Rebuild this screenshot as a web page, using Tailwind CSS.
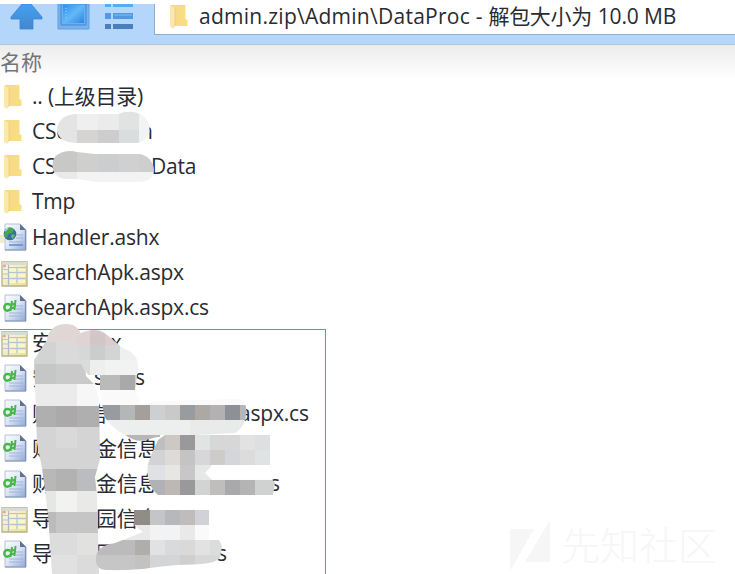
<!DOCTYPE html>
<html lang="zh-CN">
<head>
<meta charset="utf-8">
<title>admin.zip</title>
<script src="https://cdn.jsdelivr.net/npm/@tailwindcss/browser@4"></script>
</head>
<body class="bg-white">
<svg class="absolute size-0">
  <defs>
    <linearGradient id="fg" x1="0" x2="1"><stop offset="0" stop-color="#f5d888"/><stop offset="1" stop-color="#f9df83"/></linearGradient>
    <linearGradient id="pg" x1="0" y1="0" x2="1" y2="1"><stop offset="0" stop-color="#fbfcff"/><stop offset=".5" stop-color="#dce5f5"/><stop offset="1" stop-color="#8fa7d4"/></linearGradient>
    <linearGradient id="tg" x1="0" y1="0" x2="1" y2="1"><stop offset="0" stop-color="#faf9ed"/><stop offset="1" stop-color="#e9df91"/></linearGradient>
    <linearGradient id="bg" x1="0" y1="0" x2="0" y2="1"><stop offset="0" stop-color="#42a0f2"/><stop offset="1" stop-color="#4587cd"/></linearGradient>
    <linearGradient id="sq" x1="0" y1="0" x2="1" y2="1"><stop offset="0" stop-color="#2c8ff0"/><stop offset=".5" stop-color="#65b8f8"/><stop offset="1" stop-color="#2f85e0"/></linearGradient>
    <symbol id="folder" viewBox="0 0 28 30"><path d="M5 3h14.500v14l2 1v6H5z" fill="url(#fg)"/><path d="M4 3l5 3v17l-2 4-3-2z" fill="#fbe8ac"/><path d="M9 6v17l-1 2" fill="none" stroke="#efcb72" stroke-width=".8"/></symbol>
    <symbol id="page" viewBox="0 0 28 30"><path d="M5 2h15l6 6v20H5z" fill="url(#pg)" stroke="#b6c0d2"/><path d="M25.500 8v20H5" fill="none" stroke="#7f93b8" stroke-width="1.200"/><path d="M20 2v6h6z" fill="#61718f"/><path d="M16 13h7M16 16h7M9 20h14M9 23h14" stroke="#9fb3da" stroke-width="1"/></symbol>
    <symbol id="cs" viewBox="0 0 28 30"><use href="#page"/><path d="M10 11.500C6 10 4.300 12 4.300 14.500s2.700 4.500 5.700 2" fill="none" stroke="#48b648" stroke-width="2.500"/><path d="M10.500 18l1.500-10M14.500 17l1-10M9.500 12.500l6-2M9.500 16l6-2" fill="none" stroke="#48b648" stroke-width="2"/></symbol>
    <symbol id="globe" viewBox="0 0 28 30"><use href="#page"/><path d="M0 13h4v8H0z" fill="#eeeccb"/><circle cx="10" cy="12" r="6.300" fill="#37709f"/><path d="M5 8c3-4 8-3 9 0l-2 3-4 1-1 4-3-2z" fill="#4aa655"/><path d="M12 12l3 1-2 4-2-2z" fill="#68b874"/><path d="M5 9l3-3" stroke="#a7d8ed" stroke-width="1.500"/><path d="M9 23h14" stroke="#5f84d0" stroke-width="1.300"/></symbol>
    <symbol id="table" viewBox="0 0 28 30"><path d="M2 4h25v24H2z" fill="url(#tg)" stroke="#b5b389" stroke-width="1.300"/><path d="M2 4h25v3H2z" fill="#d9dcd0"/><path d="M8.500 7v20" stroke="#aab9cc" stroke-width="1.200"/><path d="M3 11.500h6M3 16h6M3 20.500h6M9 9.500h17M9 14.500h17M9 20.500h17M17 9v16" stroke="#b7c3ce"/><path d="M10 11h6v2h-6zM18 11h7v2h-7zM10 16h6v3h-6zM18 16h7v3h-7zM10 22h6v3h-6zM18 22h7v3h-7z" fill="#f8f5cf"/><circle cx="4.500" cy="8" r="1.500" fill="#f0a08c"/></symbol>
  </defs>
</svg>
<div class="relative flex h-[574px] w-[735px] flex-col overflow-hidden bg-white font-['Open_Sans','Noto_Sans_CJK_SC',sans-serif] text-[21px] text-[#282b32]">
  <header class="mt-1 flex h-[41px] shrink-0 border-b border-[#b6c3d1] bg-[#b3d6fa]">
    <svg class="h-[40px] w-[154px] shrink-0" viewBox="0 4 154 40">
      <path d="M22 4h9l11 13v2H33v10H20V19H11v-2z" fill="url(#bg)" stroke="#4087d4" stroke-width=".8"/>
      <path d="M58 4h31v25H58z" fill="#78b2ec" stroke="#5e9fe3"/><path d="M61 4h25v21H61z" fill="#68b0f0" stroke="#3f89d5"/><path d="M63 5h21v18H63z" fill="url(#sq)"/><path d="M66 8v12" stroke="#a8dafa" stroke-dasharray="1 2"/>
      <path d="M105 4h6v3h-6zM113 4h20v3h-20z" fill="#50adf6"/><path d="M105 13h6v6h-6zM113 13h20v6h-20z" fill="#509ae5"/><path d="M105 24h6v5h-6zM113 24h20v5h-20z" fill="#4c7fba"/><path d="M114 15h18" stroke="#80bdf1"/>
    </svg>
    <div class="flex h-[31px] flex-1 items-center border-b border-l border-[#8eaed0] bg-white pb-[4px] pl-[11px]">
      <svg class="h-[30px] w-[28px] shrink-0" viewBox="0 0 28 30"><use href="#folder"/></svg>
      <span class="ml-[5px] whitespace-nowrap tracking-[0.26px]">admin.zip\Admin\DataProc - <span class="tracking-[-0.3px]">解包大小为</span> <span class="tracking-[-0.15px]">10.0 MB</span></span>
    </div>
  </header>
  <div class="flex h-[34px] shrink-0 items-center bg-linear-to-b from-[#ececec] to-white pt-[2px] text-[#747474]"><span>名称</span></div>
  <main class="flex flex-col whitespace-nowrap tracking-[-0.2px] *:flex *:h-[35.2px] *:shrink-0 *:items-center *:gap-[4px]">
    <div><svg class="h-[30px] w-[28px]"><use href="#folder"/></svg><span>.. (上级目录)</span></div>
    <div><svg class="h-[30px] w-[28px]"><use href="#folder"/></svg><span class="w-[104px]">CSc</span><span>n</span></div>
    <div><svg class="h-[30px] w-[28px]"><use href="#folder"/></svg><span class="w-[115px]">CS</span><span>Data</span></div>
    <div><svg class="h-[30px] w-[28px]"><use href="#folder"/></svg><span>Tmp</span></div>
    <div><svg class="h-[30px] w-[28px]"><use href="#globe"/></svg><span>Handler.ashx</span></div>
    <div><svg class="h-[30px] w-[28px]"><use href="#table"/></svg><span>SearchApk.aspx</span></div>
    <div><svg class="h-[30px] w-[28px]"><use href="#cs"/></svg><span>SearchApk.aspx.cs</span></div>
    <div><svg class="h-[30px] w-[28px]"><use href="#table"/></svg><span class="w-[62px]">安</span><span>px</span></div>
    <div><svg class="h-[30px] w-[28px]"><use href="#cs"/></svg><span class="w-[58px]">安</span><span class="w-[37px]">sp</span><span>s</span></div>
    <div><svg class="h-[30px] w-[28px]"><use href="#cs"/></svg><span class="w-[50px]">财</span><span class="w-[149px]">信</span><span>aspx.cs</span></div>
    <div><svg class="h-[30px] w-[28px]"><use href="#cs"/></svg><span class="w-[60px]">财</span><span>金信息<span class="-ml-[1px]">化</span></span></div>
    <div><svg class="h-[30px] w-[28px]"><use href="#cs"/></svg><span class="w-[60px]">财</span><span class="w-[170px]">金信息</span><span>s</span></div>
    <div><svg class="h-[30px] w-[28px]"><use href="#table"/></svg><span class="w-[60px]">导</span><span>园信息</span></div>
    <div><svg class="h-[30px] w-[28px]"><use href="#cs"/></svg><span class="w-[60px]">导</span><span class="w-[117px]">园</span><span>s</span></div>
  </main>

  <!-- highlight frame, pixelated masks and watermark -->
  <div class="absolute -left-px top-[329px] h-[250px] w-[327px] border border-[#ff5c5c]"></div>
  <svg class="absolute inset-0 h-[574px] w-[735px]" viewBox="0 0 735 574" shape-rendering="crispEdges">
    <defs>
      <clipPath id="c1"><path d="M57 129C58 119 67 114 76 114h42c10-4 22-3 28 5 5 7 5 17-2 21-5 4-10 3-17 3H77c-12 0-20-5-20-14z"/></clipPath>
      <clipPath id="c2"><path d="M53 161c2-8 14-12 24-9l18 2h43c9 0 16 8 16 16 0 9-8 12-17 12H95l-18-3H64c-8-2-13-8-11-18z"/></clipPath>
      <clipPath id="c3"><path d="M34 360l13-20c1-10 8-16 19-16 9 0 13 4 16 12l4 40 8 8 5 15 1 60-5 18 2 18 2 79H52l-4-60-6-46-5-25z"/></clipPath>
      <clipPath id="c4"><path d="M75 345c0-10 7-15 20-15 11 0 18 12 30 19 13 5 15 15 12 27l-2 14 6 15 16-4 80-2c8 0 11 10 9 16-1 9-5 14-11 18l-78 4-11 3c-8 2-13 0-21-5-10-5-19-14-21-20l-5-30-6-5-9-10c-4-8-6-16-5-25z"/></clipPath>
      <clipPath id="c5"><path d="M158 440l7-5h105v30h-57l-8 8 5 5h61l4 5-2 12H158c-9-8-12-19-10-31l4-11z"/></clipPath>
      <clipPath id="c6"><path d="M96 560c0-12 8-15 19-17l28-11-9-7V510h75v30h10l3 6-2 12c-7 7-22 6-42 7-29 2-35 6-72 5-5 0-10-3-10-10z"/></clipPath>
    </defs>
    <g clip-path="url(#c1)">
      <path fill="#e4e4e4" d="M57 112h20v32H57z"/><path fill="#efefef" d="M77 112h21v18H77z"/><path fill="#ebebeb" d="M98 112h21v18H98z"/><path fill="#e1e2e2" d="M119 110h20v20h-20z"/><path fill="#d5d4d3" d="M77 130h21v15H77z"/><path fill="#cdcdcd" d="M98 130h21v15H98z"/><path fill="#dadddd" d="M119 130h21v15h-21z"/><path fill="#f2f3f3" d="M139 110h14v36h-14z"/>
    </g>
    <g clip-path="url(#c2)">
      <path fill="#c8c8c7" d="M52 148h25v24H52z"/><path fill="#cfcfce" d="M77 148h21v24H77z"/><path fill="#cccdcf" d="M98 148h21v24H98z"/><path fill="#d0d0d0" d="M119 148h20v24h-20z"/><path fill="#cecece" d="M139 148h17v24h-17z"/><path fill="#eaeaea" d="M52 172h25v12H52z"/><path fill="#f3f3f3" d="M77 172h80v12H77z"/>
    </g>
    <g clip-path="url(#c3)">
      <path fill="#e0d6d6" d="M34 320h70v22H34z"/><path fill="#d2d4d3" d="M34 342h22v22H34z"/><path fill="#dadada" d="M56 342h48v22H56z"/>
      <path fill="#c5c6c6" d="M34 364h22v20H34z"/><path fill="#cacaca" d="M56 364h48v20H56z"/><path fill="#ebebeb" d="M34 384h43v22H34z"/><path fill="#f7f7f7" d="M77 384h30v22H77z"/>
      <path fill="#b0afaf" d="M34 406h22v21H34z"/><path fill="#aba9aa" d="M56 406h21v21H56z"/><path fill="#aeafae" d="M77 406h30v21H77z"/>
      <path fill="#d3d4d3" d="M34 427h73v42H34z"/><path fill="#d9d9d9" d="M56 427h21v21H56z"/>
      <path fill="#b9b8b8" d="M34 469h22v22H34z"/><path fill="#b2b2b1" d="M56 469h21v22H56z"/><path fill="#bbbcbf" d="M77 469h30v22H77z"/>
      <path fill="#e5e7e7" d="M34 491h22v21H34z"/><path fill="#f2f2f1" d="M56 491h21v21H56z"/><path fill="#e9e9e8" d="M77 491h30v21H77z"/>
      <path fill="#bcbbbb" d="M34 512h22v21H34z"/><path fill="#c5c5c5" d="M56 512h51v21H56z"/><path fill="#dcdcdd" d="M34 533h43v22H34z"/><path fill="#e1e1e0" d="M77 533h30v22H77z"/><path fill="#e1e1e1" d="M34 555h43v20H34z"/><path fill="#dbdbdb" d="M77 555h30v20H77z"/>
    </g>
    <g clip-path="url(#c4)">
      <path fill="#e1d3d3" d="M74 328h16v17H74z"/><path fill="#d3c6c6" d="M90 328h15v17H90z"/><path fill="#decbcb" d="M105 328h15v17h-15z"/>
      <path fill="#d6d7d7" d="M74 345h16v15H74z"/><path fill="#cbcccd" d="M90 345h15v15H90z"/><path fill="#d3d5d5" d="M105 345h15v15h-15z"/><path fill="#eeefef" d="M120 345h25v15h-25z"/>
      <path fill="#dadcdc" d="M74 360h16v15H74z"/><path fill="#eeefec" d="M90 360h15v15H90z"/><path fill="#f1f2f1" d="M105 360h35v15h-35z"/>
      <path fill="#b9bbbb" d="M100 375h20v15h-20z"/><path fill="#a9a9aa" d="M120 375h15v15h-15z"/><path fill="#cdd0d0" d="M135 375h15v15h-15z"/>
      <path fill="#fafafa" d="M100 390h150v15H100z"/>
      <path fill="#989ca0" d="M100 405h20v15h-20z"/><path fill="#b4b6b7" d="M120 405h15v15h-15z"/><path fill="#a49f9b" d="M135 405h15v15h-15z"/><path fill="#cecfd1" d="M150 405h15v15h-15z"/><path fill="#cbc9c8" d="M165 405h15v15h-15z"/><path fill="#989c9f" d="M180 405h15v15h-15z"/><path fill="#aca9a4" d="M195 405h15v15h-15z"/><path fill="#b3b1b2" d="M210 405h15v15h-15z"/><path fill="#8d9197" d="M225 405h15v15h-15z"/><path fill="#b6b6b8" d="M240 405h10v15h-10z"/>
      <path fill="#edefee" d="M100 420h90v15h-90z"/><path fill="#e9eaea" d="M190 420h60v15h-60z"/><path fill="#b9b7b5" d="M120 435h40v10h-40z"/>
    </g>
    <g clip-path="url(#c5)">
      <path fill="#bdbfc0" d="M147 435h18v15h-18z"/><path fill="#cec8c5" d="M165 435h15v15h-15z"/><path fill="#99999b" d="M180 435h15v15h-15z"/><path fill="#e0e4e3" d="M195 435h15v15h-15z"/><path fill="#d7d7d8" d="M210 435h30v15h-30z"/><path fill="#e2e2e3" d="M240 435h15v15h-15z"/><path fill="#dddfe1" d="M255 435h15v15h-15z"/>
      <path fill="#d1d3d5" d="M147 450h18v15h-18z"/><path fill="#dcdbd9" d="M165 450h15v15h-15z"/><path fill="#c4c4c5" d="M180 450h15v15h-15z"/><path fill="#d7d7d9" d="M195 450h15v15h-15z"/><path fill="#cdcccb" d="M210 450h15v15h-15z"/><path fill="#d5d6d9" d="M225 450h15v15h-15z"/><path fill="#dcdcdd" d="M240 450h15v15h-15z"/><path fill="#e0e3e3" d="M255 450h15v15h-15z"/>
      <path fill="#e0e1e4" d="M147 465h18v15h-18z"/><path fill="#e8e6e3" d="M165 465h15v15h-15z"/><path fill="#c7c7ca" d="M180 465h15v15h-15z"/><path fill="#e6e8e8" d="M195 465h16v15h-16z"/><path fill="#fdfdfd" d="M211 465h75v15h-75z"/>
      <path fill="#b0b2b6" d="M147 480h18v15h-18z"/><path fill="#beb8b5" d="M165 480h15v15h-15z"/><path fill="#99999b" d="M180 480h15v15h-15z"/><path fill="#d1d4d3" d="M195 480h15v15h-15z"/><path fill="#bfbebd" d="M210 480h15v15h-15z"/><path fill="#a9a8aa" d="M225 480h15v15h-15z"/><path fill="#b4b4b4" d="M240 480h15v15h-15z"/><path fill="#d0d2d2" d="M255 480h20v15h-20z"/>
    </g>
    <g clip-path="url(#c6)">
      <path fill="#918d86" d="M134 510h16v15h-16z"/><path fill="#c4c5c9" d="M150 510h15v15h-15z"/><path fill="#b7b8ba" d="M165 510h15v15h-15z"/><path fill="#bfbcbb" d="M180 510h15v15h-15z"/><path fill="#d1d2d7" d="M195 510h15v15h-15z"/>
      <path fill="#e9e9e9" d="M100 525h50v15h-50z"/><path fill="#f3f3f3" d="M150 525h30v15h-30z"/><path fill="#e9e9e9" d="M180 525h15v15h-15z"/><path fill="#fafafa" d="M195 525h26v15h-26z"/>
      <path fill="#bcbbbb" d="M96 540h39v15H96z"/><path fill="#afaeaa" d="M135 540h15v15h-15z"/><path fill="#e1e2e4" d="M150 540h15v15h-15z"/><path fill="#d9dadc" d="M165 540h15v15h-15z"/><path fill="#dbd9d7" d="M180 540h15v15h-15z"/><path fill="#e2e2e2" d="M195 540h15v15h-15z"/><path fill="#dadddb" d="M210 540h15v15h-15z"/>
      <path fill="#c7c6c6" d="M96 555h39v16H96z"/><path fill="#c4c2c1" d="M135 555h15v16h-15z"/><path fill="#d4d5d7" d="M150 555h30v16h-30z"/><path fill="#cfcfce" d="M180 555h15v16h-15z"/><path fill="#d6d7d8" d="M195 555h26v16h-26z"/>
    </g>
    <path d="M510 529h24l-24 42zM550 520v42h-25z" fill="#f6f6f6"/>
    <text x="561" y="560" font-size="39" font-weight="300" fill="#f6f6f6" textLength="156" class="font-['Noto_Sans_CJK_SC',sans-serif]">先知社区</text>
  </svg>
</div>
</body>
</html>
